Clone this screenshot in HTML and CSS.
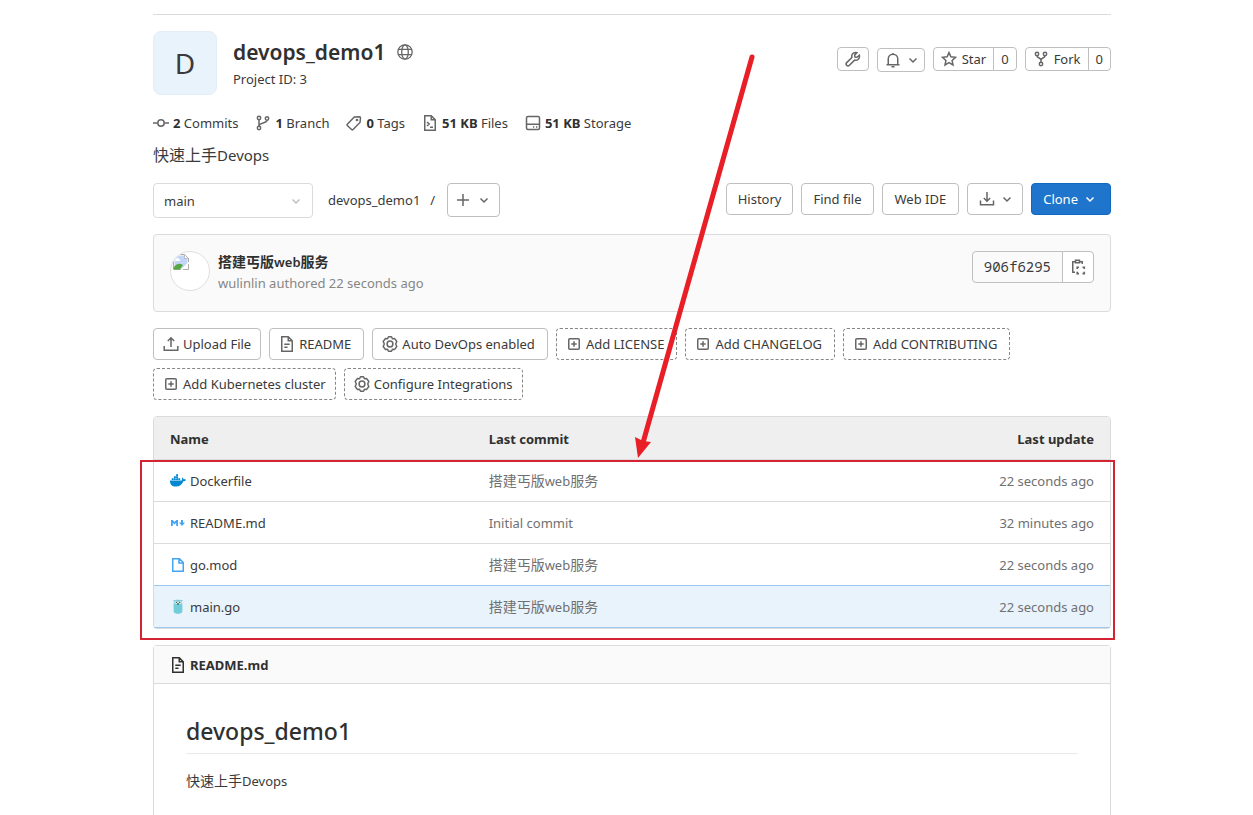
FILE: index.html
```html
<!DOCTYPE html>
<html lang="en">
<head>
<meta charset="utf-8">
<title>devops_demo1</title>
<link rel="stylesheet" href="styles.css">
</head>
<body>
<svg class="defs" aria-hidden="true">
  <symbol id="chevron" viewBox="0 0 16 16"><path d="M4.500 6.500 8 10l3.500-3.500"/></symbol>
  <symbol id="plus-square" viewBox="0 0 16 16"><rect x="2.750" y="2.750" width="10.500" height="10.500" rx="1"/><path d="M8 5.300v5.400M5.300 8h5.400"/></symbol>
  <symbol id="gear" viewBox="0 0 16 16"><path stroke-linejoin="round" d="M6.500.800h3l.9 1.900 2.300-.1 2.100 2.900L13.700 8l1.100 2.500-2.100 2.900-2.300-.1-.9 1.900h-3l-.9-1.900-2.300.1-2.100-2.900L2.300 8 1.200 5.500l2.100-2.900 2.300.1z"/><circle cx="8" cy="8" r="2.900"/></symbol>
  <symbol id="doc" viewBox="0 0 16 16"><path d="M3.750.750h5.500l4 4v10.500H2.750V.750zM9.250 1v3.750h3.800M5.300 8.250h5.400M5.300 11.250h3.200"/></symbol>
</svg>

<main class="page">
  <header class="project">
    <div class="avatar">D</div>
    <div class="project-name">
      <h1>devops_demo1
        <svg class="icon globe" viewBox="0 0 16 16"><circle cx="8" cy="8" r="7.200"/><ellipse cx="8" cy="8" rx="3.300" ry="7.200"/><path d="M1.500 5.400h13M1.500 10.600h13"/></svg>
      </h1>
      <p>Project ID: 3</p>
    </div>
    <div class="project-actions">
      <button class="btn small" type="button" aria-label="Settings"><svg class="icon" viewBox="0 0 16 16"><path d="M14.300 4.200 12 6.300l-2-.300-.300-2L11.900 1.700C9.400.800 6.800 2.500 6.700 5c0 .600.100 1 .200 1.500L1.700 11.600a1.900 1.900 0 0 0 2.700 2.700l5.200-5.200c2.700.900 5.700-1.700 4.700-4.900z"/></svg></button>
      <button class="btn small notify" type="button" aria-label="Notifications"><svg class="icon" viewBox="0 0 16 16"><path d="M8 1v1.500M1.500 12.750h13M3.250 12.500V7a4.750 4.750 0 0 1 9.500 0v5.500M6.500 14.800h3"/></svg><svg class="icon"><use href="#chevron"/></svg></button>
      <div class="group">
        <button class="btn small" type="button"><svg class="icon" viewBox="0 0 16 16"><path d="m8 1.600 1.900 4.200 4.600.500-3.400 3.100.9 4.600-4-2.300-4 2.300.9-4.600-3.400-3.100 4.600-.5z"/></svg>Star</button><a class="btn small count" href="#">0</a>
      </div>
      <div class="group">
        <button class="btn small" type="button"><svg class="icon" viewBox="0 0 16 16"><circle cx="4" cy="3" r="1.700"/><circle cx="12" cy="3" r="1.700"/><circle cx="8" cy="13" r="1.700"/><path d="M4 4.700C4 7.500 8 6.500 8 9v2.300M12 4.700C12 7.500 8 6.500 8 9"/></svg>Fork</button><a class="btn small count" href="#">0</a>
      </div>
    </div>
  </header>

  <nav class="stats">
    <a href="#"><svg class="icon" viewBox="0 0 16 16"><circle cx="8" cy="8" r="3.200"/><path d="M0 8h4.500M11.500 8H16"/></svg><span><b>2</b> Commits</span></a>
    <a href="#"><svg class="icon" viewBox="0 0 16 16"><circle cx="4" cy="3" r="1.700"/><circle cx="12" cy="3.500" r="1.700"/><circle cx="4" cy="13" r="1.700"/><path d="M4 4.700v6.600M12 5.200c0 3.500-7.500 2-8 5.500"/></svg><span><b>1</b> Branch</span></a>
    <a href="#"><svg class="icon" viewBox="0 0 16 16"><path d="m1.300 9.300 7-7.200 5.200-.3c.8 0 1 .3 1 1L14 7.500l-7 7a1 1 0 0 1-1.400 0l-4.300-4a1 1 0 0 1 0-1.200z"/><circle cx="11" cy="5" r=".6"/></svg><span><b>0</b> Tags</span></a>
    <a href="#"><svg class="icon" viewBox="0 0 16 16"><path d="M3 .750h6.250l4 4v10.500H2.750V.750zM9.250 1v3.750h3.800M5 7l2.200 2L5 11M8 12.300h3"/></svg><span><b>51 KB</b> Files</span></a>
    <a href="#"><svg class="icon" viewBox="0 0 16 16"><rect x="1.500" y="1.500" width="13" height="13" rx="1.500"/><path d="M1.500 9.300h13M8 12h1.300M11 12h1.300"/></svg><span><b>51 KB</b> Storage</span></a>
  </nav>

  <p class="description"><span class="han">快速上手</span>Devops</p>

  <div class="tree-bar">
    <button class="ref-picker" type="button">main<svg class="icon"><use href="#chevron"/></svg></button>
    <div class="crumbs"><a href="#">devops_demo1</a><span>/</span></div>
    <button class="btn add" type="button" aria-label="Add to tree"><svg class="icon" viewBox="0 0 16 16"><path d="M8 2v12M2 8h12"/></svg><svg class="icon"><use href="#chevron"/></svg></button>
    <div class="tree-actions">
      <a class="btn" href="#">History</a>
      <a class="btn" href="#">Find file</a>
      <button class="btn ide" type="button">Web IDE</button>
      <button class="btn download" type="button" aria-label="Download"><svg class="icon" viewBox="0 0 16 16"><path d="M8 1v9M4.800 7 8 10.200 11.200 7M1.500 9.500v4.200h13V9.500"/></svg><svg class="icon"><use href="#chevron"/></svg></button>
      <button class="btn primary" type="button">Clone<svg class="icon"><use href="#chevron"/></svg></button>
    </div>
  </div>

  <section class="commit">
    <div class="author-pic">
      <svg viewBox="0 0 16 16"><path fill="#fff" stroke="#a9a9a9" d="M.5.500h11l4 4v11H.5z"/><path fill="#c3d6f7" d="M1.500 1.500H11l3.500 3.500v5l-6 4.500h-7z"/><path fill="#fff" d="M3 5c.3-1.500 2.500-1.500 3 0 1.500 0 1.500 2 0 2H3C1.700 7 1.700 5 3 5z"/><path fill="#56a845" d="M1 13c3-4 6-4 9-2l-3 4.500H1z"/><path fill="#fff" stroke="#a9a9a9" stroke-width=".7" d="M11.500.500v4h4z"/><path fill="#fff" d="m7.500 16 8.500-8.500v2L9.500 16z"/></svg>
    </div>
    <div class="commit-text">
      <a class="commit-title" href="#"><span class="han">搭建丐版</span>web<span class="han">服务</span></a>
      <p>wulinlin authored 22 seconds ago</p>
    </div>
    <div class="group">
      <span class="btn sha">906f6295</span><button class="btn copy" type="button" aria-label="Copy commit SHA"><svg class="icon" viewBox="0 0 16 16"><path d="M5 2.750H2.750v10.500H5M10 2.750h2.250V5M5.500 1.250h4v2.500h-4z"/><path stroke-width="1.700" d="M7.250 10V8.250H9M12.500 8.250h1.750V10M14.250 12.700v2H12.500M9 14.700H7.250v-2"/></svg></button>
    </div>
  </section>

  <div class="shortcuts">
    <a class="btn" href="#"><svg class="icon" viewBox="0 0 16 16"><path d="M8 11V2M4.800 5 8 1.800 11.200 5M1.200 10v4.200h13.600V10"/></svg>Upload File</a>
    <a class="btn roomy" href="#"><svg class="icon"><use href="#doc"/></svg>README</a>
    <a class="btn roomy" href="#"><svg class="icon"><use href="#gear"/></svg>Auto DevOps enabled</a>
    <a class="btn dashed roomy" href="#"><svg class="icon"><use href="#plus-square"/></svg>Add LICENSE</a>
    <a class="btn dashed roomy" href="#"><svg class="icon"><use href="#plus-square"/></svg>Add CHANGELOG</a>
    <a class="btn dashed roomy" href="#"><svg class="icon"><use href="#plus-square"/></svg>Add CONTRIBUTING</a>
    <a class="btn dashed" href="#"><svg class="icon"><use href="#plus-square"/></svg>Add Kubernetes cluster</a>
    <a class="btn dashed" href="#"><svg class="icon"><use href="#gear"/></svg>Configure Integrations</a>
  </div>

  <div class="files">
    <table>
      <thead><tr><th>Name</th><th>Last commit</th><th class="when">Last update</th></tr></thead>
      <tbody>
        <tr><td><a href="#"><svg class="file-icon" viewBox="0 0 16 16"><path fill="#0288d1" d="M0 7.500h11.800c.5-.7.400-1.700 0-2.400l.6-.7c.7.500 1.100 1.100 1.200 1.900.8-.2 1.600-.1 2.400.4-.5 1.100-1.400 1.500-2.700 1.500C12 11.700 9.500 13.600 6 13.600c-4.200 0-6-2.100-6-6.100zM1.700 5.200h1.900v1.800H1.700zm2.200 0h1.900v1.800H3.900zm2.200 0H8v1.800H6.100zm2.200 0h1.900v1.800H8.300zM3.900 3.200h1.900v1.700H3.900zm2.200 0H8v1.700H6.100zm0-2H8v1.700H6.100z"/></svg>Dockerfile</a></td><td><span class="han">搭建丐版</span>web<span class="han">服务</span></td><td class="when">22 seconds ago</td></tr>
        <tr><td><a href="#"><svg class="file-icon" viewBox="0 0 16 16"><path fill="#42a5f5" d="M1 11V5h1.800l1.700 2 1.700-2H8v6H6.200V7.700L4.500 9.500 2.800 7.700V11zM11 5h2v2.600h2L12 11 9 7.600h2z"/></svg>README.md</a></td><td>Initial commit</td><td class="when">32 minutes ago</td></tr>
        <tr><td><a href="#"><svg class="file-icon" viewBox="0 0 16 16"><path fill="none" stroke="#42a5f5" stroke-width="1.500" d="M3 1.750h6.500l3.750 3.750v8.750H2.750V1.750zM9 2v4h4"/></svg>go.mod</a></td><td><span class="han">搭建丐版</span>web<span class="han">服务</span></td><td class="when">22 seconds ago</td></tr>
        <tr class="active"><td><a href="#"><svg class="file-icon" viewBox="0 0 16 16"><path fill="#73cdd8" d="M4 2.500C2.500 1.500 3.500.500 5 1.300c2-.6 4-.6 6 0 1.500-.8 2.500.2 1 1.200.6 3.500.4 7 .3 10.500-.8 2.400-7.800 2.400-8.600 0-.1-3.500-.3-7 .3-10.500z"/><circle cx="6" cy="3.200" r="1.500" fill="#fff"/><circle cx="10" cy="3.200" r="1.500" fill="#fff"/><circle cx="6.200" cy="3.200" r=".7" fill="#222"/><circle cx="9.800" cy="3.200" r=".7" fill="#222"/><path fill="#222" d="M7.200 4.500h1.600v1H7.200z"/></svg>main.go</a></td><td><span class="han">搭建丐版</span>web<span class="han">服务</span></td><td class="when">22 seconds ago</td></tr>
      </tbody>
    </table>
    <div class="highlight"></div>
  </div>

  <article class="readme">
    <header><svg class="icon"><use href="#doc"/></svg>README.md</header>
    <div class="readme-body">
      <h2>devops_demo1</h2>
      <p><span class="han">快速上手</span>Devops</p>
    </div>
  </article>

  <svg class="arrow" viewBox="0 0 120 406"><path d="M117 4 8.500 388" stroke="#e81f26" stroke-width="5" stroke-linecap="round"/><path fill="#e81f26" d="m3 405-3-21 8 4 8 1z"/></svg>
</main>
</body>
</html>
```

FILE: styles.css
```css
* { box-sizing: border-box; }

body {
  margin: 0;
  color: #3a3a3a;
  background: #fff;
  font: 13px/20px "Noto Sans", "Noto Sans CJK SC", sans-serif;
}

h1, h2, p { margin: 0; }
h1, h2, th, b { color: #303030; }
a { color: inherit; text-decoration: none; }
.han { font-size: 14px; }
.defs { display: none; }

.page {
  position: relative;
  padding: 14px 142px 0 153px;
}

.icon {
  flex: none;
  width: 16px;
  height: 16px;
  fill: none;
  stroke: #666;
  stroke-width: 1.5;
}

/* Buttons */
.btn {
  display: inline-flex;
  align-items: center;
  justify-content: center;
  gap: 4px;
  height: 32px;
  padding: 0 11px;
  border: 1px solid #bfbfbf;
  border-radius: 4px;
  background: #fff;
  color: #3a3a3a;
  font: inherit;
  white-space: nowrap;
}
.btn.small { height: 24px; padding: 0 7px; }
.btn.primary { padding-right: 12px; border-color: #1068bf; background: #1f75cb; color: #fff; }
.btn.primary .icon { stroke: #fff; }
.btn.dashed { border: 1px dashed #868686; }
.btn.ide { padding: 0 12px; }
.btn.download { padding-right: 7px; }
.group { display: flex; }
.group .btn:first-child { border-radius: 4px 0 0 4px; }
.group .btn:last-child { margin-left: -1px; border-radius: 0 4px 4px 0; }

/* Project heading */
.project {
  display: flex;
  gap: 16px;
  padding-top: 16px;
  border-top: 1px solid #dbdbdb;
}
.avatar {
  display: grid;
  place-items: center;
  width: 64px;
  height: 64px;
  border: 1px solid #e3edf8;
  border-radius: 8px;
  background: #e9f3fc;
  font-size: 28px;
}
.project-name { padding-top: 4px; }
.project-name h1 {
  display: flex;
  align-items: center;
  gap: 12px;
  font-size: 21px;
  font-weight: 600;
  line-height: 34px;
}
.globe { stroke-width: 1.3; }
.project-actions {
  display: flex;
  gap: 8px;
  margin: 16px 0 0 auto;
  height: 24px;
}
.project-actions .btn { gap: 5px; }
.project-actions .notify { gap: 4px; margin-top: 1px; padding-right: 3px; }

.stats {
  display: flex;
  gap: 17px;
  margin-top: 18px;
}
.stats a { display: flex; align-items: center; gap: 4px; }
.description { margin-top: 11px; font-size: 15px; line-height: 22px; }
.description .han { font-size: 16px; }

/* Branch and file tools */
.tree-bar {
  display: flex;
  align-items: flex-start;
  margin-top: 17px;
}
.ref-picker {
  display: flex;
  align-items: center;
  justify-content: space-between;
  width: 160px;
  height: 35px;
  padding: 0 8px 0 10px;
  border: 1px solid #dbdbdb;
  border-radius: 4px;
  background: #fff;
  color: #3a3a3a;
  font: inherit;
}
.ref-picker .icon { stroke: #bfbfbf; }
.crumbs {
  display: flex;
  gap: 10px;
  padding: 7px 12px 0 15px;
}
.add { height: 34px; padding: 0 7px; gap: 5px; }
.tree-actions { display: flex; gap: 8px; margin-left: auto; }

/* Last commit */
.commit {
  display: flex;
  gap: 8px;
  margin-top: 16px;
  height: 78px;
  padding: 16px;
  border: 1px solid #dbdbdb;
  border-radius: 4px;
  background: #fafafa;
}
.author-pic {
  overflow: hidden;
  width: 40px;
  height: 40px;
  border: 1px solid #dfdfdf;
  border-radius: 50%;
  background: #fff;
}
.author-pic svg { display: block; width: 16px; height: 16px; margin: 2px 0 0 2px; }
.commit-text { flex: 1; line-height: 21px; }
.commit-title { color: #303030; font-weight: 600; }
.commit-text p { color: #868686; }
.sha {
  background: #fafafa;
  font-family: "Noto Sans Mono", "DejaVu Sans Mono", monospace;
  font-size: 14px;
}
.copy { padding: 0 7px; }

.shortcuts {
  display: flex;
  flex-wrap: wrap;
  gap: 8px;
  margin-top: 16px;
}
.shortcuts .btn { padding: 0 9px; }
.shortcuts .roomy { padding-right: 12px; }

/* File table */
.files {
  position: relative;
  margin-top: 16px;
  border: 1px solid #dbdbdb;
  border-radius: 4px;
}
table { width: 100%; border-collapse: separate; border-spacing: 0; table-layout: fixed; }
th, td {
  height: 42px;
  padding: 0 16px;
  border-bottom: 1px solid #dbdbdb;
  text-align: left;
}
th { height: 43px; padding-top: 2px; background: #efefef; font-weight: 700; }
th:first-child { border-radius: 4px 0 0; }
th:last-child { border-radius: 0 4px 0 0; }
td { color: #707070; }
td a { display: flex; align-items: center; gap: 4px; color: #3a3a3a; }
.when { text-align: right; }
.file-icon { width: 16px; height: 16px; }
tr:has(+ .active) td, .active td { border-bottom-color: #9dc7f1; }
.active td { background: #e9f3fc; }
.highlight {
  position: absolute;
  inset: 43px -5px -12px -14px;
  border: 2px solid #d42433;
}

/* Readme */
.readme {
  margin-top: 16px;
  border: 1px solid #dbdbdb;
  border-bottom: 0;
  border-radius: 4px 4px 0 0;
}
.readme > header {
  display: flex;
  align-items: center;
  gap: 4px;
  height: 38px;
  padding: 0 16px;
  border-bottom: 1px solid #dbdbdb;
  background: #fafafa;
  color: #303030;
  font-weight: 700;
}
.readme > header .icon { stroke: #303030; }
.readme-body { padding: 31px 32px 24px; }
.readme-body h2 {
  padding-bottom: 6px;
  border-bottom: 1px solid #eaeaea;
  font-size: 23px;
  font-weight: 500;
  line-height: 32px;
}
.readme-body p { margin-top: 17px; }

.arrow {
  position: absolute;
  top: 53px;
  left: 635px;
  width: 120px;
  height: 406px;
  fill: none;
  pointer-events: none;
}
```
